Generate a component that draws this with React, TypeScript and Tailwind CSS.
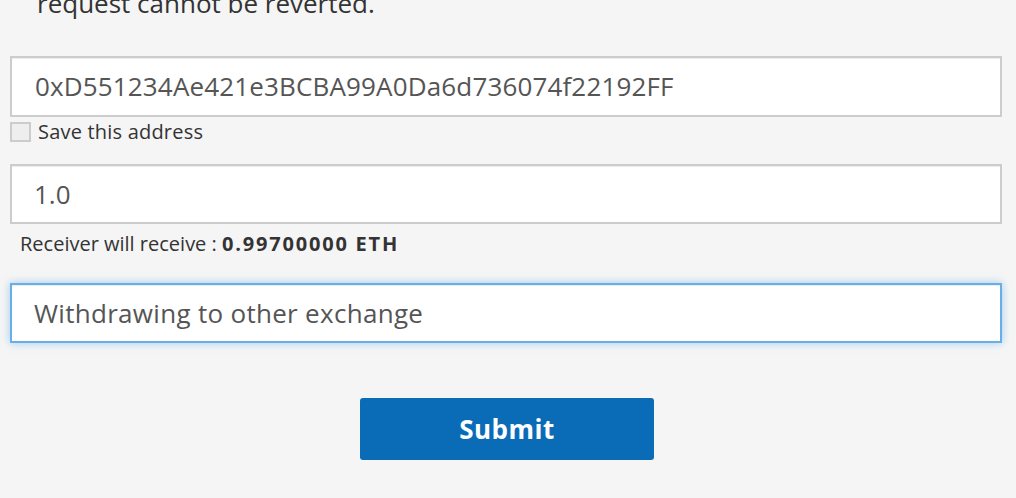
import React from "react";

export default function App() {
  const font = { fontFamily: '"Open Sans", "Liberation Sans", sans-serif' };
  return (
    <div className="w-[1016px] h-[498px] bg-[#f5f5f5] overflow-hidden text-[#333]" style={font}>
      <div className="ml-[10px] w-[992px]">
        <div className="-mt-[14px] h-[34px] leading-[34px] text-[26px] pl-[27px] text-[#333]">
          request cannot be reverted.
        </div>
        <div className="mt-[36px] h-[61px] border-2 border-[#ccc] bg-white shadow-[inset_0_1px_1px_rgba(0,0,0,0.075)] flex items-center pl-[23px] text-[26px] tracking-[0.15px] text-[#555]">
          0xD551234Ae421e3BCBA99A0Da6d736074f22192FF
        </div>
        <div className="mt-[5px] flex items-center h-[20px]">
          <div className="w-[21px] h-[20px] border-2 border-[#ccc] bg-[#eee]" />
          <span className="ml-[7px] text-[20px] tracking-[0.2px] text-[#333]">Save this address</span>
        </div>
        <div className="mt-[22px] h-[60px] border-2 border-[#ccc] bg-white shadow-[inset_0_1px_1px_rgba(0,0,0,0.075)] flex items-center pl-[22px] text-[26px] text-[#555]">
          1.0
        </div>
        <div className="mt-[10px] pl-[10px] text-[20px] leading-[20px] text-[#333]">
          Receiver will receive : <span className="font-bold tracking-[1.8px]">0.99700000 ETH</span>
        </div>
        <div className="mt-[29px] h-[60px] border-2 border-[#66afe9] bg-white shadow-[inset_0_1px_1px_rgba(0,0,0,0.075),0_0_8px_rgba(102,175,233,0.6)] flex items-center pl-[22px] text-[26px] tracking-[0.3px] text-[#555]">
          Withdrawing to other exchange
        </div>
        <div className="mt-[55px] flex justify-center pl-[2px]">
          <button className="w-[294px] h-[62px] bg-[#0a6cb7] rounded-[3px] text-white font-bold text-[26px] tracking-[0.5px]">
            Submit
          </button>
        </div>
      </div>
    </div>
  );
}
